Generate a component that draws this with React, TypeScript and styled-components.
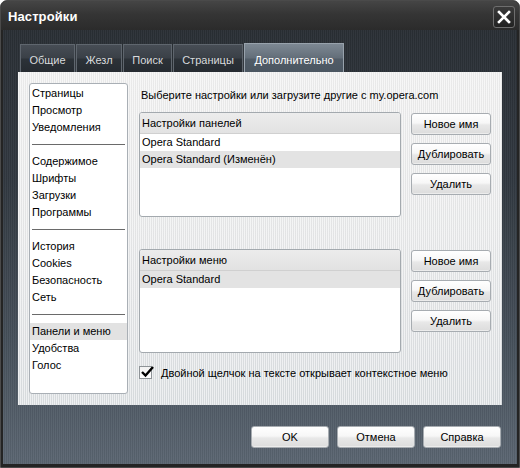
import React from 'react'
import styled, { createGlobalStyle } from 'styled-components'

const GlobalStyle = createGlobalStyle`
  html, body {
    margin: 0;
    padding: 0;
    background: #ffffff;
  }
  body {
    font-family: 'Liberation Sans', Arial, sans-serif;
    font-size: 11px;
    color: #000;
  }
`

const Window = styled.div`
  width: 520px;
  height: 468px;
  box-sizing: border-box;
  display: flex;
  flex-direction: column;
  background: #242424;
  border: 1px solid #4a4a4a;
  border-radius: 7px 7px 0 0;
  overflow: hidden;
`

const TitleBar = styled.div`
  height: 29px;
  flex: none;
  display: flex;
  align-items: center;
  justify-content: space-between;
  padding: 0 4px 0 7px;
  background: linear-gradient(180deg, #454545 0%, #353535 45%, #2b2b2b 100%);
`

const Title = styled.div`
  color: #ffffff;
  font-size: 13px;
  font-weight: bold;
  letter-spacing: 0.1px;
  margin-top: 2px;
`

const CloseButton = styled.div`
  width: 20px;
  height: 20px;
  margin-top: 2px;
  display: flex;
  align-items: center;
  justify-content: center;
  border: 1px solid #6e6e6e;
  border-radius: 3px;
  background: linear-gradient(180deg, #3a3a3a, #222222);
`

const Body = styled.div`
  flex: 1;
  margin: 0 2px 3px 2px;
  display: flex;
  flex-direction: column;
  padding: 14px 15px 0 15px;
  background:
    repeating-linear-gradient(90deg, rgba(255, 255, 255, 0.035) 0 1px, rgba(0, 0, 0, 0.05) 1px 2px),
    linear-gradient(180deg, #2a2f35 0%, #323941 35%, #46505a 70%, #5b6672 100%);
`

const TabRow = styled.div`
  display: flex;
  height: 28px;
  gap: 1px;
  padding-left: 2px;
  align-items: flex-end;
`

const Tab = styled.div<{ $active?: boolean; $width: number }>`
  width: ${(p) => p.$width}px;
  height: ${(p) => (p.$active ? 30 : 28)}px;
  margin-bottom: ${(p) => (p.$active ? -1 : 0)}px;
  box-sizing: border-box;
  display: flex;
  align-items: center;
  justify-content: center;
  padding-top: 2px;
  color: ${(p) => (p.$active ? '#ffffff' : '#d8dadc')};
  border: 1px solid ${(p) => (p.$active ? '#98a2ac' : '#5f666e')};
  border-bottom: none;
  white-space: nowrap;
  background: ${(p) =>
    p.$active
      ? 'linear-gradient(180deg, #7d8893 0%, #636e79 48%, #515c67 52%, #4b5661 100%)'
      : 'linear-gradient(180deg, #474d55 0%, #3a4047 48%, #2c3238 52%, #262b31 100%)'};
`

const Panel = styled.div`
  height: 333px;
  box-sizing: border-box;
  display: flex;
  gap: 11px;
  padding: 11px;
  background:
    repeating-linear-gradient(90deg, rgba(255, 255, 255, 0.55) 0 1px, rgba(0, 0, 0, 0.015) 1px 2px),
    linear-gradient(180deg, #ededed 0%, #e6e7e8 50%, #d9dde0 100%);
`

const SideList = styled.div`
  width: 100px;
  box-sizing: border-box;
  background: #ffffff;
  border: 1px solid #a9afb5;
  border-radius: 3px;
  padding-top: 1px;
  display: flex;
  flex-direction: column;
`

const SideItem = styled.div<{ $selected?: boolean }>`
  height: 17px;
  line-height: 17px;
  padding-left: 2px;
  white-space: nowrap;
  background: ${(p) => (p.$selected ? '#e2e2e2' : 'transparent')};
`

const SideSeparator = styled.div`
  height: 17px;
  display: flex;
  align-items: center;
  padding: 0 2px;
  &::after {
    content: '';
    flex: 1;
    height: 1px;
    background: #6a6a6a;
  }
`

const RightColumn = styled.div`
  flex: 1;
  display: flex;
  flex-direction: column;
`

const Hint = styled.div`
  height: 17px;
  line-height: 17px;
  margin: 4px 0 8px 2px;
`

const Group = styled.div<{ $gap: number }>`
  display: flex;
  gap: 10px;
  margin-bottom: ${(p) => p.$gap}px;
`

const ListBox = styled.div<{ $height: number }>`
  width: 262px;
  height: ${(p) => p.$height}px;
  box-sizing: border-box;
  background: #ffffff;
  border: 1px solid #a3a9ae;
  border-radius: 3px;
  overflow: hidden;
`

const ListHeader = styled.div`
  height: 20px;
  line-height: 20px;
  padding-left: 2px;
  background: linear-gradient(180deg, #ececec 0%, #e2e2e2 100%);
  border-bottom: 1px solid #d0d0d0;
`

const ListRow = styled.div<{ $selected?: boolean }>`
  height: 17px;
  line-height: 17px;
  padding-left: 2px;
  background: ${(p) => (p.$selected ? '#e3e3e3' : 'transparent')};
`

const ButtonColumn = styled.div`
  display: flex;
  flex-direction: column;
  gap: 8px;
  padding-top: 1px;
`

const Button = styled.div<{ $width: number }>`
  width: ${(p) => p.$width}px;
  height: 22px;
  box-sizing: border-box;
  display: flex;
  align-items: center;
  justify-content: center;
  border: 1px solid #a7acb1;
  border-radius: 3px;
  background: linear-gradient(180deg, #ffffff 0%, #f7f7f7 45%, #e8e8e8 55%, #dcdcdc 100%);
  box-shadow: inset 0 -1px 0 #ececec;
  white-space: nowrap;
`

const CheckRow = styled.label`
  display: flex;
  align-items: center;
  gap: 9px;
`

const CheckBox = styled.span`
  width: 13px;
  height: 13px;
  box-sizing: border-box;
  border: 1px solid #8e9397;
  background: linear-gradient(180deg, #f2f2f2, #ffffff);
  position: relative;
`

const CheckMark = styled.svg`
  position: absolute;
  left: 0;
  top: -2px;
`

const Footer = styled.div`
  flex: 1;
  display: flex;
  justify-content: flex-end;
  align-items: flex-start;
  gap: 8px;
  padding-top: 21px;
  padding-right: 1px;
`

type SideEntry = { label?: string; sep?: boolean; selected?: boolean }

const sideEntries: SideEntry[] = [
  { label: 'Страницы' },
  { label: 'Просмотр' },
  { label: 'Уведомления' },
  { sep: true },
  { label: 'Содержимое' },
  { label: 'Шрифты' },
  { label: 'Загрузки' },
  { label: 'Программы' },
  { sep: true },
  { label: 'История' },
  { label: 'Cookies' },
  { label: 'Безопасность' },
  { label: 'Сеть' },
  { sep: true },
  { label: 'Панели и меню', selected: true },
  { label: 'Удобства' },
  { label: 'Голос' },
]

const tabs = [
  { label: 'Общие', width: 55 },
  { label: 'Жезл', width: 46 },
  { label: 'Поиск', width: 49 },
  { label: 'Страницы', width: 70 },
  { label: 'Дополнительно', width: 100 },
]

const SetupButtons = () => (
  <ButtonColumn>
    <Button $width={80}>Новое имя</Button>
    <Button $width={80}>Дублировать</Button>
    <Button $width={80}>Удалить</Button>
  </ButtonColumn>
)

const App = () => {
  return (
    <>
      <GlobalStyle />
      <Window>
        <TitleBar>
          <Title>Настройки</Title>
          <CloseButton>
            <svg width="14" height="14" viewBox="0 0 14 14">
              <path d="M2 2 L12 12 M12 2 L2 12" stroke="#ffffff" strokeWidth="2.6" strokeLinecap="square" />
            </svg>
          </CloseButton>
        </TitleBar>
        <Body>
          <TabRow>
            {tabs.map((t, i) => (
              <Tab key={t.label} $width={t.width} $active={i === tabs.length - 1}>
                {t.label}
              </Tab>
            ))}
          </TabRow>
          <Panel>
            <SideList>
              {sideEntries.map((e, i) =>
                e.sep ? (
                  <SideSeparator key={i} />
                ) : (
                  <SideItem key={i} $selected={e.selected}>
                    {e.label}
                  </SideItem>
                )
              )}
            </SideList>
            <RightColumn>
              <Hint>Выберите настройки или загрузите другие с my.opera.com</Hint>
              <Group $gap={32}>
                <ListBox $height={105}>
                  <ListHeader>Настройки панелей</ListHeader>
                  <ListRow>Opera Standard</ListRow>
                  <ListRow $selected>Opera Standard (Изменён)</ListRow>
                </ListBox>
                <SetupButtons />
              </Group>
              <Group $gap={13}>
                <ListBox $height={104}>
                  <ListHeader>Настройки меню</ListHeader>
                  <ListRow $selected>Opera Standard</ListRow>
                </ListBox>
                <SetupButtons />
              </Group>
              <CheckRow>
                <CheckBox>
                  <CheckMark width="15" height="13" viewBox="0 0 15 13">
                    <path d="M2 7 L5.5 10.5 L13 2" fill="none" stroke="#000000" strokeWidth="2.4" />
                  </CheckMark>
                </CheckBox>
                Двойной щелчок на тексте открывает контекстное меню
              </CheckRow>
            </RightColumn>
          </Panel>
          <Footer>
            <Button $width={78}>OK</Button>
            <Button $width={78}>Отмена</Button>
            <Button $width={78}>Справка</Button>
          </Footer>
        </Body>
      </Window>
    </>
  )
}

export default App
